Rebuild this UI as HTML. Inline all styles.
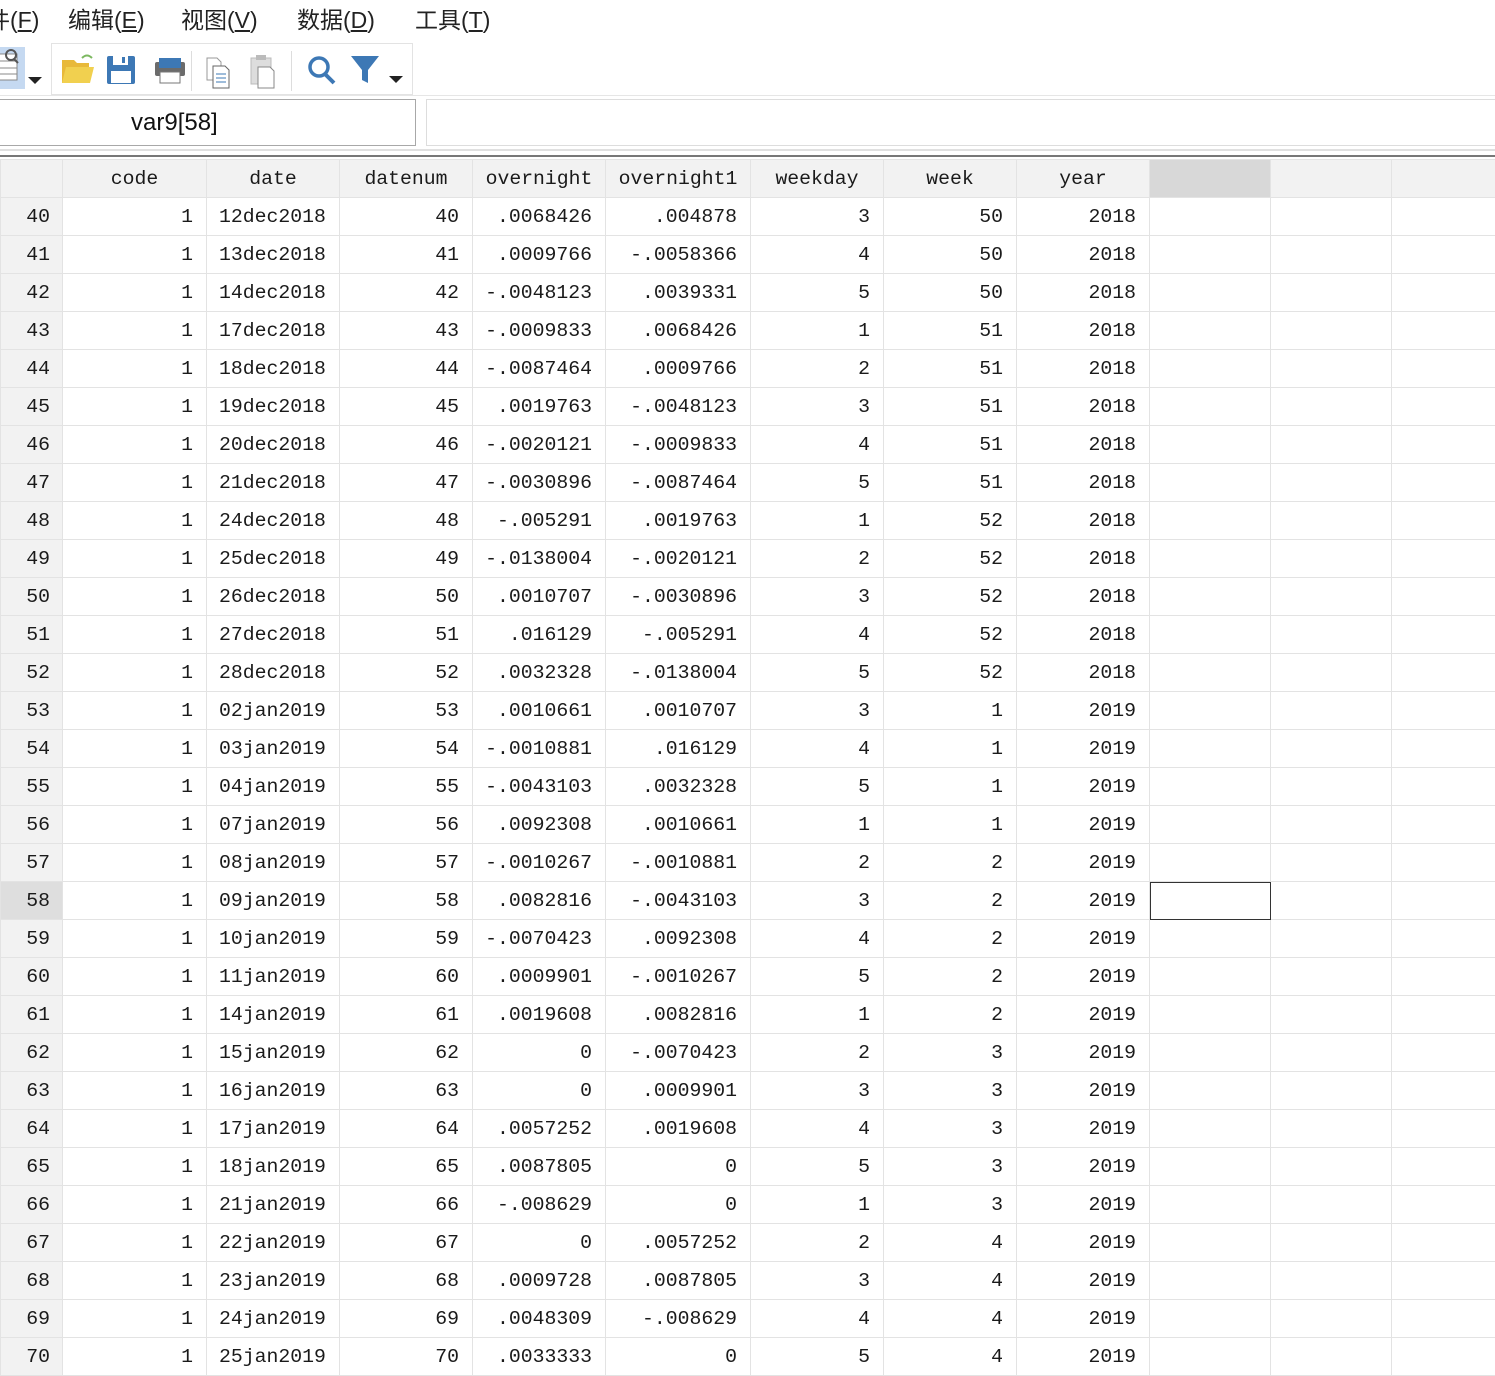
<!DOCTYPE html>
<html><head><meta charset="utf-8"><style>
*{margin:0;padding:0;box-sizing:border-box}
body{width:1495px;height:1351px;overflow:hidden;background:#fff;position:relative;font-family:"Liberation Sans","Noto Sans CJK SC",sans-serif}
.menu{position:absolute;top:1px;font-size:23px;color:#222;white-space:nowrap}
.menu span{position:absolute}
.abs{position:absolute}
table{position:absolute;left:0;top:159px;border-collapse:collapse;table-layout:fixed;width:1495px;font-family:"Liberation Mono",monospace;font-size:19.8px;color:#1a1a1a}
td{height:38px;border:1px solid #e3e3e3;text-align:right;padding:0 13px 0 0;white-space:nowrap;overflow:hidden}
td.l{text-align:left;padding:0 0 0 12px}
tr.hd td{background:#f2f2f2;text-align:center;padding:0}
tr.hd td.sel{background:#d8d8d8}
td.rh{background:#f2f2f2;padding-right:12px}
td.rs{background:#dedede}
</style></head><body>
<div class="menu"><span style="left:-13px">件(<u>F</u>)</span><span style="left:68px">编辑(<u>E</u>)</span><span style="left:181px">视图(<u>V</u>)</span><span style="left:297px">数据(<u>D</u>)</span><span style="left:415px">工具(<u>T</u>)</span></div>
<div class="abs" style="left:0;top:47px;width:25px;height:42px;background:#c5d9f1"></div>
<svg class="abs" style="left:0;top:47px" width="50" height="45"><rect x="-5" y="7" width="22" height="26" fill="#fff" stroke="#888"/><line x1="-5" y1="14" x2="17" y2="14" stroke="#888"/><line x1="-5" y1="21" x2="17" y2="21" stroke="#888"/><line x1="-5" y1="27" x2="17" y2="27" stroke="#888"/><circle cx="11" cy="8" r="5" fill="none" stroke="#555" stroke-width="2"/><line x1="14" y1="12" x2="18" y2="16" stroke="#555" stroke-width="2"/><path d="M28 30h14l-7 7z" fill="#222"/></svg>
<div class="abs" style="left:51px;top:43px;width:362px;height:52px;border:1px solid #e3e3e3"></div>
<div class="abs" style="left:191px;top:51px;width:1px;height:40px;background:#ddd"></div>
<div class="abs" style="left:291px;top:51px;width:1px;height:40px;background:#ddd"></div>
<svg class="abs" style="left:55px;top:44px" width="360" height="50">
<path d="M7 16h12l3 3h12v20H7z" fill="#e8b93a"/><path d="M7 39l4-16h28l-4 16z" fill="#f1d04f"/><path d="M27 14q5-5 10 0" fill="none" stroke="#7cb860" stroke-width="2"/>
<rect x="52" y="12" width="28" height="28" rx="2" fill="#3d78b5"/><rect x="58" y="12" width="15" height="9" fill="#fff"/><rect x="67" y="13" width="3" height="6" fill="#3d78b5"/><rect x="56" y="27" width="20" height="12" fill="#fff"/>
<rect x="100" y="18" width="30" height="14" rx="2" fill="#6b6b6b"/><rect x="104" y="14" width="22" height="10" fill="#3d78b5"/><rect x="105" y="28" width="20" height="11" fill="#fff" stroke="#777"/>
<path d="M152 14h10l4 4v18h-14z" fill="#fff" stroke="#999"/><path d="M158 22h12l4 4v18h-16z" fill="#fff" stroke="#666"/><path d="M161 30h10M161 34h10M161 38h10" stroke="#3d78b5"/>
<rect x="196" y="14" width="20" height="26" fill="#ddd" stroke="#bbb"/><rect x="201" y="11" width="10" height="5" fill="#bbb"/><path d="M203 23h12l4 4v17h-16z" fill="#fff" stroke="#888"/>
<circle cx="264" cy="23" r="9" fill="none" stroke="#3d78b5" stroke-width="3.5"/><line x1="270" y1="30" x2="279" y2="39" stroke="#3d78b5" stroke-width="4"/>
<path d="M296 12h28l-11 14v13l-6-3V26z" fill="#3d78b5"/><path d="M334 32h14l-7 7z" fill="#222"/>
</svg>
<div class="abs" style="left:0;top:95px;width:1495px;height:1px;background:#e6e6e6"></div>
<div class="abs" style="left:-2px;top:99px;width:418px;height:47px;border:1px solid #a8a8a8;font-size:24px;color:#111;padding:9px 0 0 132px">var9[58]</div>
<div class="abs" style="left:426px;top:99px;width:1080px;height:47px;border:1px solid #ddd"></div>
<div class="abs" style="left:0;top:149px;width:1495px;height:2px;background:#e0e0e0"></div>
<div class="abs" style="left:0;top:155px;width:1495px;height:2px;background:#777"></div>
<table>
<colgroup><col style="width:62px"><col style="width:144px"><col style="width:133px"><col style="width:133px"><col style="width:133px"><col style="width:145px"><col style="width:133px"><col style="width:133px"><col style="width:133px"><col style="width:121px"><col style="width:121px"><col style="width:104px"></colgroup>
<tr class="hd"><td></td><td>code</td><td>date</td><td>datenum</td><td>overnight</td><td>overnight1</td><td>weekday</td><td>week</td><td>year</td><td class="sel"></td><td></td><td></td></tr>
<tr><td class="rh">40</td><td>1</td><td class="l">12dec2018</td><td>40</td><td>.0068426</td><td>.004878</td><td>3</td><td>50</td><td>2018</td><td></td><td></td><td></td></tr>
<tr><td class="rh">41</td><td>1</td><td class="l">13dec2018</td><td>41</td><td>.0009766</td><td>-.0058366</td><td>4</td><td>50</td><td>2018</td><td></td><td></td><td></td></tr>
<tr><td class="rh">42</td><td>1</td><td class="l">14dec2018</td><td>42</td><td>-.0048123</td><td>.0039331</td><td>5</td><td>50</td><td>2018</td><td></td><td></td><td></td></tr>
<tr><td class="rh">43</td><td>1</td><td class="l">17dec2018</td><td>43</td><td>-.0009833</td><td>.0068426</td><td>1</td><td>51</td><td>2018</td><td></td><td></td><td></td></tr>
<tr><td class="rh">44</td><td>1</td><td class="l">18dec2018</td><td>44</td><td>-.0087464</td><td>.0009766</td><td>2</td><td>51</td><td>2018</td><td></td><td></td><td></td></tr>
<tr><td class="rh">45</td><td>1</td><td class="l">19dec2018</td><td>45</td><td>.0019763</td><td>-.0048123</td><td>3</td><td>51</td><td>2018</td><td></td><td></td><td></td></tr>
<tr><td class="rh">46</td><td>1</td><td class="l">20dec2018</td><td>46</td><td>-.0020121</td><td>-.0009833</td><td>4</td><td>51</td><td>2018</td><td></td><td></td><td></td></tr>
<tr><td class="rh">47</td><td>1</td><td class="l">21dec2018</td><td>47</td><td>-.0030896</td><td>-.0087464</td><td>5</td><td>51</td><td>2018</td><td></td><td></td><td></td></tr>
<tr><td class="rh">48</td><td>1</td><td class="l">24dec2018</td><td>48</td><td>-.005291</td><td>.0019763</td><td>1</td><td>52</td><td>2018</td><td></td><td></td><td></td></tr>
<tr><td class="rh">49</td><td>1</td><td class="l">25dec2018</td><td>49</td><td>-.0138004</td><td>-.0020121</td><td>2</td><td>52</td><td>2018</td><td></td><td></td><td></td></tr>
<tr><td class="rh">50</td><td>1</td><td class="l">26dec2018</td><td>50</td><td>.0010707</td><td>-.0030896</td><td>3</td><td>52</td><td>2018</td><td></td><td></td><td></td></tr>
<tr><td class="rh">51</td><td>1</td><td class="l">27dec2018</td><td>51</td><td>.016129</td><td>-.005291</td><td>4</td><td>52</td><td>2018</td><td></td><td></td><td></td></tr>
<tr><td class="rh">52</td><td>1</td><td class="l">28dec2018</td><td>52</td><td>.0032328</td><td>-.0138004</td><td>5</td><td>52</td><td>2018</td><td></td><td></td><td></td></tr>
<tr><td class="rh">53</td><td>1</td><td class="l">02jan2019</td><td>53</td><td>.0010661</td><td>.0010707</td><td>3</td><td>1</td><td>2019</td><td></td><td></td><td></td></tr>
<tr><td class="rh">54</td><td>1</td><td class="l">03jan2019</td><td>54</td><td>-.0010881</td><td>.016129</td><td>4</td><td>1</td><td>2019</td><td></td><td></td><td></td></tr>
<tr><td class="rh">55</td><td>1</td><td class="l">04jan2019</td><td>55</td><td>-.0043103</td><td>.0032328</td><td>5</td><td>1</td><td>2019</td><td></td><td></td><td></td></tr>
<tr><td class="rh">56</td><td>1</td><td class="l">07jan2019</td><td>56</td><td>.0092308</td><td>.0010661</td><td>1</td><td>1</td><td>2019</td><td></td><td></td><td></td></tr>
<tr><td class="rh">57</td><td>1</td><td class="l">08jan2019</td><td>57</td><td>-.0010267</td><td>-.0010881</td><td>2</td><td>2</td><td>2019</td><td></td><td></td><td></td></tr>
<tr><td class="rh rs">58</td><td>1</td><td class="l">09jan2019</td><td>58</td><td>.0082816</td><td>-.0043103</td><td>3</td><td>2</td><td>2019</td><td style="outline:1px solid #333;outline-offset:-1px"></td><td></td><td></td></tr>
<tr><td class="rh">59</td><td>1</td><td class="l">10jan2019</td><td>59</td><td>-.0070423</td><td>.0092308</td><td>4</td><td>2</td><td>2019</td><td></td><td></td><td></td></tr>
<tr><td class="rh">60</td><td>1</td><td class="l">11jan2019</td><td>60</td><td>.0009901</td><td>-.0010267</td><td>5</td><td>2</td><td>2019</td><td></td><td></td><td></td></tr>
<tr><td class="rh">61</td><td>1</td><td class="l">14jan2019</td><td>61</td><td>.0019608</td><td>.0082816</td><td>1</td><td>2</td><td>2019</td><td></td><td></td><td></td></tr>
<tr><td class="rh">62</td><td>1</td><td class="l">15jan2019</td><td>62</td><td>0</td><td>-.0070423</td><td>2</td><td>3</td><td>2019</td><td></td><td></td><td></td></tr>
<tr><td class="rh">63</td><td>1</td><td class="l">16jan2019</td><td>63</td><td>0</td><td>.0009901</td><td>3</td><td>3</td><td>2019</td><td></td><td></td><td></td></tr>
<tr><td class="rh">64</td><td>1</td><td class="l">17jan2019</td><td>64</td><td>.0057252</td><td>.0019608</td><td>4</td><td>3</td><td>2019</td><td></td><td></td><td></td></tr>
<tr><td class="rh">65</td><td>1</td><td class="l">18jan2019</td><td>65</td><td>.0087805</td><td>0</td><td>5</td><td>3</td><td>2019</td><td></td><td></td><td></td></tr>
<tr><td class="rh">66</td><td>1</td><td class="l">21jan2019</td><td>66</td><td>-.008629</td><td>0</td><td>1</td><td>3</td><td>2019</td><td></td><td></td><td></td></tr>
<tr><td class="rh">67</td><td>1</td><td class="l">22jan2019</td><td>67</td><td>0</td><td>.0057252</td><td>2</td><td>4</td><td>2019</td><td></td><td></td><td></td></tr>
<tr><td class="rh">68</td><td>1</td><td class="l">23jan2019</td><td>68</td><td>.0009728</td><td>.0087805</td><td>3</td><td>4</td><td>2019</td><td></td><td></td><td></td></tr>
<tr><td class="rh">69</td><td>1</td><td class="l">24jan2019</td><td>69</td><td>.0048309</td><td>-.008629</td><td>4</td><td>4</td><td>2019</td><td></td><td></td><td></td></tr>
<tr><td class="rh">70</td><td>1</td><td class="l">25jan2019</td><td>70</td><td>.0033333</td><td>0</td><td>5</td><td>4</td><td>2019</td><td></td><td></td><td></td></tr>
</table>
</body></html>
